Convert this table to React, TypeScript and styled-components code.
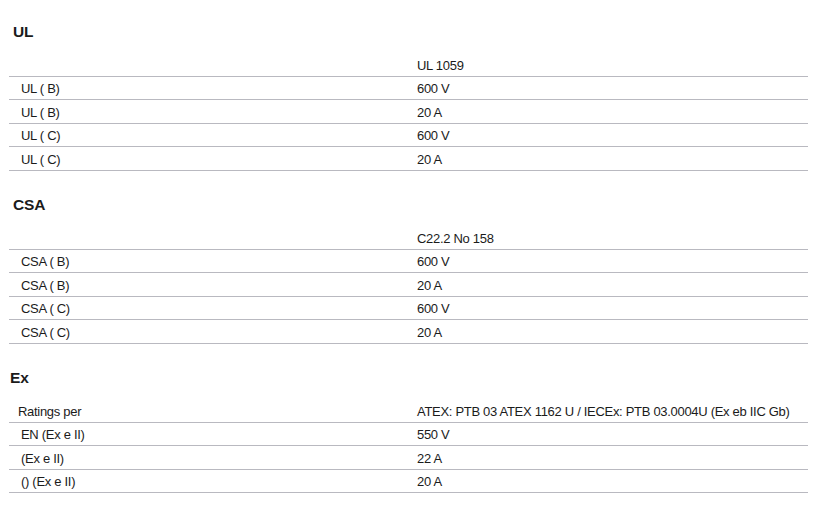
import React from "react";
import styled, { createGlobalStyle } from "styled-components";

const Global = createGlobalStyle`
  html, body { margin: 0; padding: 0; background: #ffffff; }
  body { font-family: "Liberation Sans", Arial, sans-serif; color: #1b1b1b; }
`;

const Page = styled.div`
  width: 799px;
  padding: 22px 0 0 9px;
  display: flex;
  flex-direction: column;
  gap: 24.5px;
`;

const Section = styled.section`
  display: flex;
  flex-direction: column;
`;

const Heading = styled.h2<{ $indent: number }>`
  margin: 0 0 11px 0;
  padding-left: ${(p) => p.$indent}px;
  font-size: 15.5px;
  line-height: 20px;
  font-weight: 700;
  letter-spacing: -0.1px;
`;

const Table = styled.div`
  display: flex;
  flex-direction: column;
`;

const Row = styled.div`
  display: grid;
  grid-template-columns: 400px 1fr;
  height: 23.5px;
  align-items: center;
  box-sizing: border-box;
  padding-top: 1.5px;
  border-bottom: 1px solid #b9b9c0;
  font-size: 13px;
  letter-spacing: -0.3px;
`;

const Label = styled.div<{ $head?: boolean }>`
  padding-left: ${(p) => (p.$head ? 9 : 12)}px;
  white-space: nowrap;
`;

const Value = styled.div`
  padding-left: 8px;
  white-space: nowrap;
`;

type Sec = { title: string; indent: number; head: [string, string]; rows: [string, string][] };

const data: Sec[] = [
  {
    title: "UL",
    indent: 4,
    head: ["", "UL 1059"],
    rows: [
      ["UL ( B)", "600 V"],
      ["UL ( B)", "20 A"],
      ["UL ( C)", "600 V"],
      ["UL ( C)", "20 A"],
    ],
  },
  {
    title: "CSA",
    indent: 4,
    head: ["", "C22.2 No 158"],
    rows: [
      ["CSA ( B)", "600 V"],
      ["CSA ( B)", "20 A"],
      ["CSA ( C)", "600 V"],
      ["CSA ( C)", "20 A"],
    ],
  },
  {
    title: "Ex",
    indent: 1,
    head: ["Ratings per", "ATEX: PTB 03 ATEX 1162 U / IECEx: PTB 03.0004U (Ex eb IIC Gb)"],
    rows: [
      ["EN (Ex e II)", "550 V"],
      ["(Ex e II)", "22 A"],
      ["() (Ex e II)", "20 A"],
    ],
  },
];

export default function App() {
  return (
    <>
      <Global />
      <Page>
        {data.map((s) => (
          <Section key={s.title}>
            <Heading $indent={s.indent}>{s.title}</Heading>
            <Table>
              <Row>
                <Label $head>{s.head[0]}</Label>
                <Value>{s.head[1]}</Value>
              </Row>
              {s.rows.map((r, i) => (
                <Row key={i}>
                  <Label>{r[0]}</Label>
                  <Value>{r[1]}</Value>
                </Row>
              ))}
            </Table>
          </Section>
        ))}
      </Page>
    </>
  );
}
